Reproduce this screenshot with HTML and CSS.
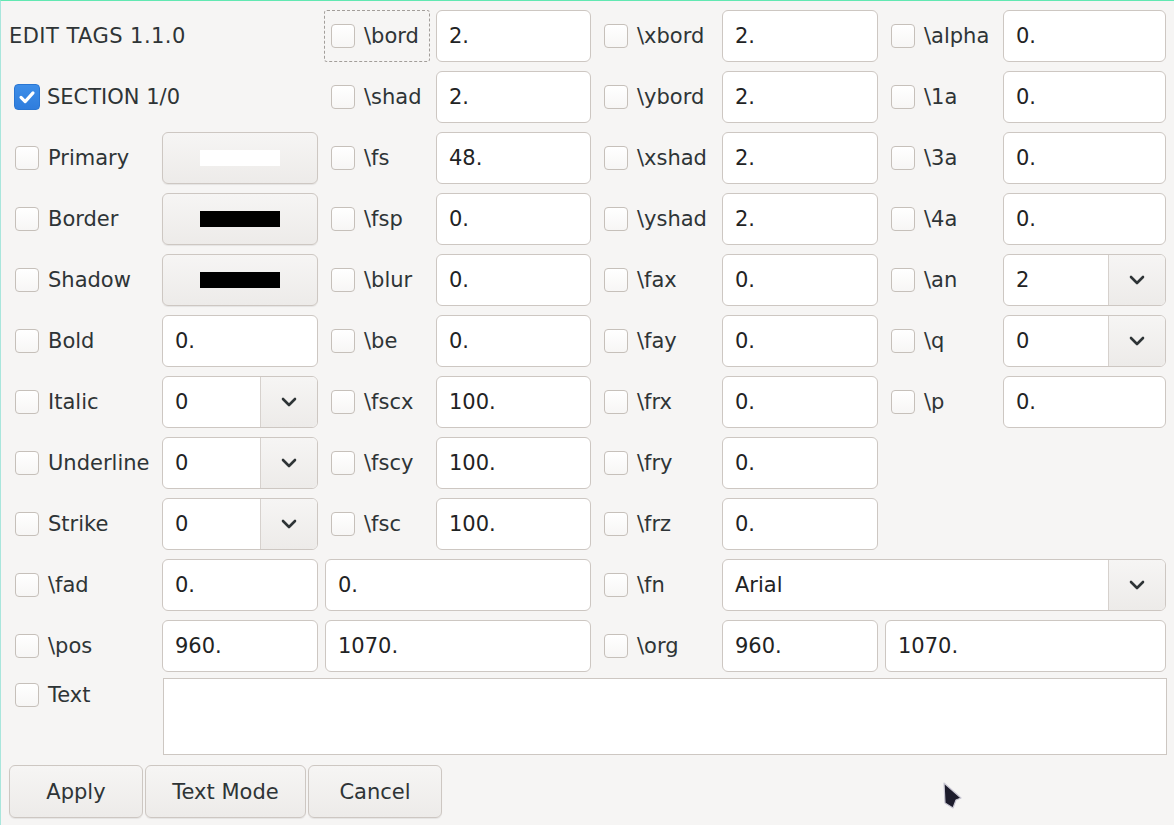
FILE: index.html
```html
<!DOCTYPE html>
<html>
<head>
<meta charset="utf-8">
<link rel="stylesheet" href="styles.css">
</head>
<body>
<div class="window">
  <div class="grid">
    <!-- row 1 -->
    <div class="title span2">EDIT TAGS 1.1.0</div>
    <label class="check focus"><span class="cb"></span><span>\bord</span></label>
    <input class="entry" value="2.">
    <label class="check"><span class="cb"></span><span>\xbord</span></label>
    <input class="entry" value="2.">
    <label class="check"><span class="cb"></span><span>\alpha</span></label>
    <input class="entry" value="0.">
    <!-- row 2 -->
    <label class="check span2"><span class="cb checked"><svg viewBox="0 0 26 26" width="26" height="26"><path d="M6.5 13.5 L11 18 L19.5 8.5" fill="none" stroke="#fff" stroke-width="3.4" stroke-linecap="round" stroke-linejoin="round"/></svg></span><span>SECTION 1/0</span></label>
    <label class="check"><span class="cb"></span><span>\shad</span></label>
    <input class="entry" value="2.">
    <label class="check"><span class="cb"></span><span>\ybord</span></label>
    <input class="entry" value="2.">
    <label class="check"><span class="cb"></span><span>\1a</span></label>
    <input class="entry" value="0.">
    <!-- row 3 -->
    <label class="check"><span class="cb"></span><span>Primary</span></label>
    <button class="colorbtn"><span class="swatch white"></span></button>
    <label class="check"><span class="cb"></span><span>\fs</span></label>
    <input class="entry" value="48.">
    <label class="check"><span class="cb"></span><span>\xshad</span></label>
    <input class="entry" value="2.">
    <label class="check"><span class="cb"></span><span>\3a</span></label>
    <input class="entry" value="0.">
    <!-- row 4 -->
    <label class="check"><span class="cb"></span><span>Border</span></label>
    <button class="colorbtn"><span class="swatch black"></span></button>
    <label class="check"><span class="cb"></span><span>\fsp</span></label>
    <input class="entry" value="0.">
    <label class="check"><span class="cb"></span><span>\yshad</span></label>
    <input class="entry" value="2.">
    <label class="check"><span class="cb"></span><span>\4a</span></label>
    <input class="entry" value="0.">
    <!-- row 5 -->
    <label class="check"><span class="cb"></span><span>Shadow</span></label>
    <button class="colorbtn"><span class="swatch black"></span></button>
    <label class="check"><span class="cb"></span><span>\blur</span></label>
    <input class="entry" value="0.">
    <label class="check"><span class="cb"></span><span>\fax</span></label>
    <input class="entry" value="0.">
    <label class="check"><span class="cb"></span><span>\an</span></label>
    <div class="combo"><span class="combo-text">2</span><span class="combo-btn"><svg viewBox="0 0 16 10" width="16" height="10"><path d="M2 2 L8 8 L14 2" fill="none" stroke="#2e3436" stroke-width="2.6" stroke-linecap="round" stroke-linejoin="round"/></svg></span></div>
    <!-- row 6 -->
    <label class="check"><span class="cb"></span><span>Bold</span></label>
    <input class="entry" value="0.">
    <label class="check"><span class="cb"></span><span>\be</span></label>
    <input class="entry" value="0.">
    <label class="check"><span class="cb"></span><span>\fay</span></label>
    <input class="entry" value="0.">
    <label class="check"><span class="cb"></span><span>\q</span></label>
    <div class="combo"><span class="combo-text">0</span><span class="combo-btn"><svg viewBox="0 0 16 10" width="16" height="10"><path d="M2 2 L8 8 L14 2" fill="none" stroke="#2e3436" stroke-width="2.6" stroke-linecap="round" stroke-linejoin="round"/></svg></span></div>
    <!-- row 7 -->
    <label class="check"><span class="cb"></span><span>Italic</span></label>
    <div class="combo"><span class="combo-text">0</span><span class="combo-btn"><svg viewBox="0 0 16 10" width="16" height="10"><path d="M2 2 L8 8 L14 2" fill="none" stroke="#2e3436" stroke-width="2.6" stroke-linecap="round" stroke-linejoin="round"/></svg></span></div>
    <label class="check"><span class="cb"></span><span>\fscx</span></label>
    <input class="entry" value="100.">
    <label class="check"><span class="cb"></span><span>\frx</span></label>
    <input class="entry" value="0.">
    <label class="check"><span class="cb"></span><span>\p</span></label>
    <input class="entry" value="0.">
    <!-- row 8 -->
    <label class="check"><span class="cb"></span><span>Underline</span></label>
    <div class="combo"><span class="combo-text">0</span><span class="combo-btn"><svg viewBox="0 0 16 10" width="16" height="10"><path d="M2 2 L8 8 L14 2" fill="none" stroke="#2e3436" stroke-width="2.6" stroke-linecap="round" stroke-linejoin="round"/></svg></span></div>
    <label class="check"><span class="cb"></span><span>\fscy</span></label>
    <input class="entry" value="100.">
    <label class="check"><span class="cb"></span><span>\fry</span></label>
    <input class="entry" value="0.">
    <div class="span2"></div>
    <!-- row 9 -->
    <label class="check"><span class="cb"></span><span>Strike</span></label>
    <div class="combo"><span class="combo-text">0</span><span class="combo-btn"><svg viewBox="0 0 16 10" width="16" height="10"><path d="M2 2 L8 8 L14 2" fill="none" stroke="#2e3436" stroke-width="2.6" stroke-linecap="round" stroke-linejoin="round"/></svg></span></div>
    <label class="check"><span class="cb"></span><span>\fsc</span></label>
    <input class="entry" value="100.">
    <label class="check"><span class="cb"></span><span>\frz</span></label>
    <input class="entry" value="0.">
    <div class="span2"></div>
    <!-- row 10 -->
    <label class="check"><span class="cb"></span><span>\fad</span></label>
    <input class="entry" value="0.">
    <input class="entry span2 shift" value="0.">
    <label class="check"><span class="cb"></span><span>\fn</span></label>
    <div class="combo span3"><span class="combo-text">Arial</span><span class="combo-btn"><svg viewBox="0 0 16 10" width="16" height="10"><path d="M2 2 L8 8 L14 2" fill="none" stroke="#2e3436" stroke-width="2.6" stroke-linecap="round" stroke-linejoin="round"/></svg></span></div>
    <!-- row 11 -->
    <label class="check"><span class="cb"></span><span>\pos</span></label>
    <input class="entry" value="960.">
    <input class="entry span2 shift" value="1070.">
    <label class="check"><span class="cb"></span><span>\org</span></label>
    <input class="entry" value="960.">
    <input class="entry span2 shift" value="1070.">
    <!-- row 12 -->
    <label class="check top"><span class="cb"></span><span>Text</span></label>
    <textarea class="textarea span7"></textarea>
  </div>
  <div class="actions">
    <button class="btn apply">Apply</button>
    <button class="btn mode">Text Mode</button>
    <button class="btn cancel">Cancel</button>
  </div>
  <svg class="cursor" width="22" height="30" viewBox="0 0 22 30"><path d="M2 2 L19 17 L14 19 L11 27 L3 22 Z" fill="#1d1c2c" stroke="#c9c7d3" stroke-width="1.2" stroke-linejoin="round"/></svg>
</div>
</body>
</html>
```

FILE: styles.css
```css
html, body {
  margin: 0;
  padding: 0;
  background: #f6f5f4;
}

body {
  font-family: "DejaVu Sans", "Liberation Sans", sans-serif;
  font-size: 21px;
  color: #2e3436;
}

.window {
  position: relative;
  width: 1174px;
  height: 825px;
  box-sizing: border-box;
  border-top: 1px solid #62e8b2;
  border-left: 1px solid #a9e6dc;
  background: #f6f5f4;
  overflow: hidden;
}

.grid {
  display: grid;
  grid-template-columns: 148px 156px 106px 155px 119px 156px 113px 163px;
  grid-template-rows: repeat(11, 52px) 74px;
  column-gap: 6px;
  row-gap: 9px;
  padding: 9px 0 0 7px;
}

.span2 { grid-column: span 2; }
.span3 { grid-column: span 3; }
.span7 { grid-column: span 7; }

.title {
  display: flex;
  align-items: center;
  padding-left: 1px;
  white-space: nowrap;
  letter-spacing: 0.45px;
}

.check {
  display: flex;
  align-items: center;
  padding-left: 6px;
  white-space: nowrap;
  box-sizing: border-box;
  border: 1px solid transparent;
  border-radius: 3px;
}

.check.top {
  align-self: start;
  height: 30px;
  margin-top: -1px;
}

.check.focus {
  border: 1px dashed #a29e9a;
  padding-left: 6px;
}

.cb {
  flex: none;
  width: 24px;
  height: 24px;
  box-sizing: border-box;
  border: 1px solid #c6c0ba;
  border-radius: 4px;
  background: linear-gradient(#ffffff, #f7f6f5);
  margin-right: 9px;
  display: flex;
  align-items: center;
  justify-content: center;
}

.cb.checked {
  width: 26px;
  height: 26px;
  margin-left: -1px;
  margin-right: 7px;
  border: 1px solid #2a76d2;
  background: linear-gradient(#3e8ee8, #2f7ddd);
}

.cb.checked svg {
  display: block;
}

.entry {
  box-sizing: border-box;
  width: 100%;
  height: 100%;
  margin: 0;
  border: 1px solid #cdc7c2;
  border-radius: 6px;
  background: #ffffff;
  font: inherit;
  color: #1f2324;
  padding: 0 0 0 12px;
  outline: none;
}

.entry.shift {
  margin-left: 1px;
  width: calc(100% - 1px);
}

.combo {
  display: flex;
  box-sizing: border-box;
  border: 1px solid #cdc7c2;
  border-radius: 6px;
  background: #ffffff;
  overflow: hidden;
}

.combo-text {
  flex: 1;
  display: flex;
  align-items: center;
  padding-left: 12px;
  color: #1f2324;
}

.combo-btn {
  flex: none;
  width: 56px;
  border-left: 1px solid #d6d1cd;
  background: linear-gradient(#f6f5f4, #edebe9);
  display: flex;
  align-items: center;
  justify-content: center;
}

.combo-btn svg {
  display: block;
}

.colorbtn {
  box-sizing: border-box;
  margin: 0;
  padding: 0;
  border: 1px solid #cdc7c2;
  border-radius: 6px;
  background: linear-gradient(#f6f5f4, #edebe9);
  box-shadow: 0 1px 1px rgba(0, 0, 0, 0.07);
  display: flex;
  align-items: center;
  justify-content: center;
}

.swatch {
  display: block;
  width: 80px;
  height: 16px;
}

.swatch.white { background: #ffffff; }
.swatch.black { background: #000000; }

.textarea {
  box-sizing: border-box;
  width: 100%;
  height: 77px;
  margin: -3px 0 0 1px;
  border: 1px solid #cdc7c2;
  border-radius: 0;
  background: #ffffff;
  resize: none;
  font: inherit;
  outline: none;
}

.actions {
  display: flex;
  gap: 2px;
  padding: 10px 0 0 8px;
}

.btn {
  box-sizing: border-box;
  height: 53px;
  margin: 0;
  border: 1px solid #cdc7c2;
  border-radius: 6px;
  background: linear-gradient(#f6f5f4, #edebe9);
  box-shadow: 0 1px 1px rgba(0, 0, 0, 0.07);
  font: inherit;
  color: #2e3436;
  padding: 0;
}

.btn.apply { width: 134px; }
.btn.mode { width: 161px; }
.btn.cancel { width: 134px; }

.cursor {
  position: absolute;
  left: 941px;
  top: 780px;
}
```
